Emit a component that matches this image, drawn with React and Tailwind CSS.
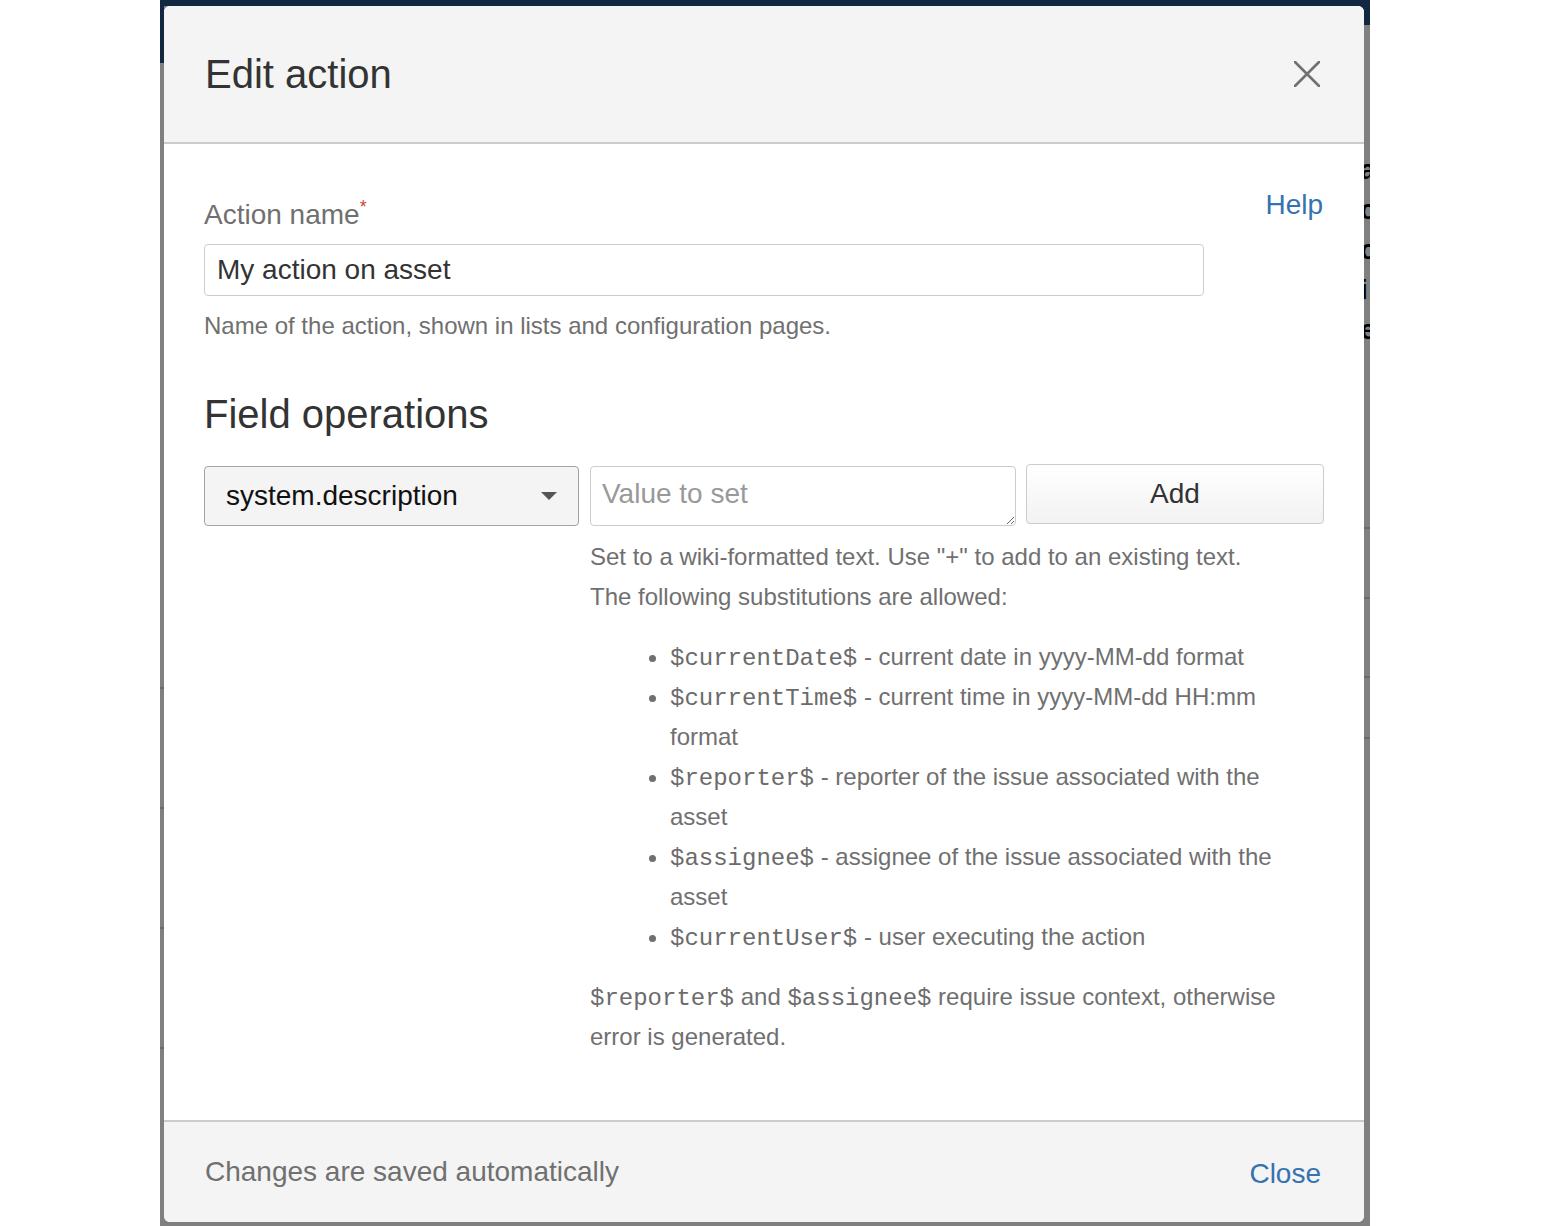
import React from 'react';

const substitutions = [
  { code: '$currentDate$', text: ' - current date in yyyy-MM-dd format' },
  { code: '$currentTime$', text: ' - current time in yyyy-MM-dd HH:mm format' },
  { code: '$reporter$', text: ' - reporter of the issue associated with the asset' },
  { code: '$assignee$', text: ' - assignee of the issue associated with the asset' },
  { code: '$currentUser$', text: ' - user executing the action' },
];

const pageFragments = ['a', 'c', 'o', 'i', 'e'];

const Code = ({ children }) => (
  <code className="font-['Liberation_Mono',monospace] text-[24px] leading-none text-[#6b6b6b]">{children}</code>
);

const App = () => {
  return (
    <div className="w-[1545px] h-[1226px] bg-white flex font-['Liberation_Sans',Arial,sans-serif]">
      {/* dimmed page behind the dialog */}
      <div className="ml-[160px] w-[1210px] h-full relative bg-[#808080] overflow-hidden">
        <div className="flex h-full">
          <div className="w-[4px] flex flex-col">
            <div className="h-[63px] bg-[#122840]" />
            <div className="h-[624px]" />
            <div className="h-[2px] bg-[#6a6a6a]" />
            <div className="h-[118px]" />
            <div className="h-[2px] bg-[#6a6a6a]" />
            <div className="h-[118px]" />
            <div className="h-[2px] bg-[#6a6a6a]" />
            <div className="h-[118px]" />
            <div className="h-[2px] bg-[#6a6a6a]" />
          </div>
          <div className="flex-1 flex flex-col">
            <div className="h-[6px] bg-[#122840]" />
          </div>
          <div className="w-[10px] flex flex-col">
            <div className="h-[25px] bg-[#122840]" />
            <div className="h-[132px]" />
            <div className="flex flex-col gap-[14px] text-[28px] font-bold leading-[26px] text-black">
              {pageFragments.map((f, i) => (
                <span key={i}>{f}</span>
              ))}
            </div>
            <div className="h-[184px]" />
            <div className="h-[2px] bg-[#6a6a6a]" />
            <div className="h-[68px]" />
            <div className="h-[2px] bg-[#6a6a6a]" />
            <div className="h-[77px]" />
            <div className="h-[2px] bg-[#6a6a6a]" />
            <div className="h-[59px]" />
            <div className="h-[2px] bg-[#6a6a6a]" />
          </div>
        </div>

        {/* Edit action dialog */}
        <div className="absolute left-[4px] top-[6px] w-[1200px] h-[1216px] rounded-[6px] bg-white overflow-hidden flex flex-col">
          <div className="h-[138px] shrink-0 bg-[#f4f4f4] border-b-2 border-[#cccccc] flex items-center justify-between pl-[41px] pr-[44px]">
            <h2 className="text-[40px] leading-[48px] text-[#333333]">Edit action</h2>
            <svg width="26" height="26" viewBox="0 0 26 26" className="text-[#707070]">
              <path d="M1 1 L25 25 M25 1 L1 25" stroke="currentColor" strokeWidth="2.6" strokeLinecap="round" fill="none" />
            </svg>
          </div>

          <div className="flex-1 pl-[40px] pr-[40px] pt-[41px]">
            <div className="flex justify-between">
              <div className="w-[1000px] pt-[10px]">
                <label className="block text-[28px] leading-[40px] text-[#707070]">
                  Action name<span className="relative top-[2px] text-[18px] align-top leading-[20px] text-[#d04437]">*</span>
                </label>
                <input
                  type="text"
                  readOnly
                  value="My action on asset"
                  className="mt-[9px] w-[1000px] h-[52px] px-[12px] border border-[#cccccc] rounded-[4px] text-[28px] text-[#333333] bg-white outline-none"
                />
                <p className="mt-[10px] text-[24px] leading-[40px] text-[#707070]">
                  Name of the action, shown in lists and configuration pages.
                </p>
              </div>
              <a className="text-[28px] leading-[40px] text-[#3572b0] pr-[1px]">Help</a>
            </div>

            <h3 className="mt-[44px] text-[40px] leading-[48px] text-[#333333]">Field operations</h3>

            <div className="mt-[26px] flex items-start">
              <div className="mt-[2px] w-[375px] h-[60px] shrink-0 flex items-center justify-between pl-[21px] pr-[21px] bg-[#f4f4f4] border border-[#a3a3a3] rounded-[4px]">
                <span className="text-[28px] text-[#111111]">system.description</span>
                <svg width="16" height="9" viewBox="0 0 16 9">
                  <path d="M0 0 L16 0 L8 8 Z" fill="#555555" />
                </svg>
              </div>

              <div className="ml-[11px] w-[426px] shrink-0">
                <textarea
                  rows={1}
                  placeholder="Value to set"
                  className="mt-[2px] block w-[426px] h-[60px] px-[11px] pt-[11px] pb-[4px] border border-[#cccccc] rounded-[4px] text-[28px] leading-[32px] text-[#333333] placeholder:text-[#999999] overflow-hidden outline-none"
                />
                <div className="mt-[11px] w-[733px] text-[24px] leading-[40px] text-[#707070]">
                  <p>Set to a wiki-formatted text. Use "+" to add to an existing text.</p>
                  <p>The following substitutions are allowed:</p>
                  <ul className="mt-[20px] list-disc pl-[80px] marker:text-[#707070]">
                    {substitutions.map((s) => (
                      <li key={s.code}>
                        <Code>{s.code}</Code>
                        {s.text}
                      </li>
                    ))}
                  </ul>
                  <p className="mt-[20px]">
                    <Code>$reporter$</Code> and <Code>$assignee$</Code> require issue context, otherwise error is generated.
                  </p>
                </div>
              </div>

              <button className="ml-[10px] w-[298px] h-[60px] shrink-0 border border-[#cccccc] rounded-[4px] bg-gradient-to-b from-white to-[#f2f2f2] text-[28px] text-[#333333]">
                Add
              </button>
            </div>
          </div>

          <div className="h-[102px] shrink-0 bg-[#f4f4f4] border-t-2 border-[#cccccc] flex items-center justify-between pl-[41px] pr-[43px]">
            <span className="text-[28px] text-[#707070]">Changes are saved automatically</span>
            <a className="text-[28px] text-[#3572b0] mt-[4px]">Close</a>
          </div>
        </div>
      </div>
    </div>
  );
};

export default App;
